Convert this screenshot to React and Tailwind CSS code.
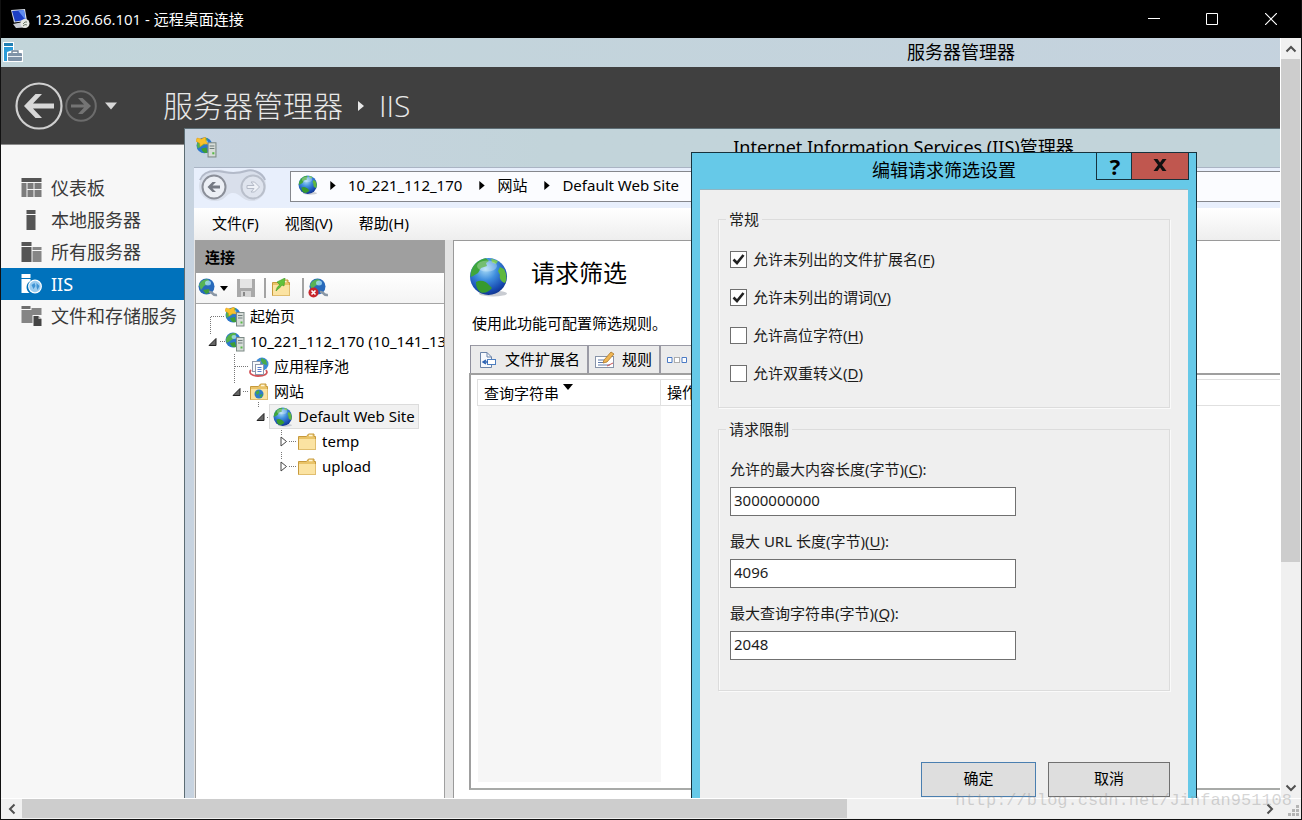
import React from "react";

/* ---------- small drawings ---------- */

function Globe({ className, id }) {
  return (
    <svg className={className} viewBox="0 0 40 40" aria-hidden="true">
      <defs>
        <radialGradient id={id} cx="0.42" cy="0.3" r="0.75">
          <stop offset="0" stopColor="#a9dcf7" />
          <stop offset="0.4" stopColor="#3f8ede" />
          <stop offset="0.8" stopColor="#1749b0" />
          <stop offset="1" stopColor="#0d2f86" />
        </radialGradient>
      </defs>
      <ellipse cx="24" cy="36.500" rx="14" ry="3" fill="#c9ccd2" />
      <circle cx="19.500" cy="19.500" r="18.500" fill={`url(#${id})`} />
      <path d="M2 15C4 7 10 2.500 17 1.300L20 4L17 6L18 9L12 11L9 16L4 19L1.500 20Z" fill="#3fa63c" />
      <path d="M7 25C12 22 18 25 20 28L23 31C20 35 16 36.500 12 35.500C8 33 7 29 7 25Z" fill="#379a2f" />
      <path d="M31 10L35 12C38 17 38 23 36 26C32 25 30 21 31 18L29 14Z" fill="#5fb83e" />
      <path d="M22 1.500L29 4L27 7L23 5.500Z" fill="#7cc85c" />
      <ellipse cx="18" cy="9" rx="10" ry="5.500" fill="#fff" opacity="0.28" />
    </svg>
  );
}

function ServerGlobe({ className, star }) {
  return (
    <svg className={className} viewBox="0 0 20 20" aria-hidden="true">
      <circle cx="8" cy="8" r="7.500" fill="#2c77cc" />
      <path d="M1 7C3 2 8 0 11 1.500L10 6L5 9L1.500 11Z" fill="#55b24a" />
      <path d="M5 11L10 10L11 15C8 16 6 14.500 5 11Z" fill="#3d9e35" />
      <ellipse cx="9" cy="5" rx="2.500" ry="2" fill="#a9dcf7" opacity="0.8" />
      {star && <path d="M1 1L5 2L9 0L9.500 4L12 7L7.500 6.500L4 9L3.500 6L0 4Z" fill="#f9c22c" stroke="#e39a12" strokeWidth="0.500" />}
      <rect x="11.500" y="5.500" width="7.500" height="13.500" fill="#d6dcd8" stroke="#7d8a86" />
      <path d="M13 8.500h4.500M13 11h4.500" stroke="#6f7d7b" />
      <rect x="15.500" y="14.500" width="2" height="2" fill="#58b947" />
    </svg>
  );
}

function Folder({ className, children }) {
  return (
    <svg className={className} viewBox="0 0 20 20" aria-hidden="true">
      <path d="M1.500 4.500h8l2-2.500h5.500v2.500h1.500v13h-17Z" fill="#e9c368" stroke="#c79a3c" />
      <path d="M2 7h16.500v10.500H2Z" fill="#fbe3a2" />
      <path d="M12 3.500h3.500" stroke="#fff6d8" strokeWidth="1.500" />
      {children}
    </svg>
  );
}

function PoolIcon({ className }) {
  return (
    <svg className={className} viewBox="0 0 20 20" aria-hidden="true">
      <circle cx="13" cy="7" r="6.500" fill="#3c8bd8" />
      <path d="M12 1L17 3L18 8L14 7L12 4Z" fill="#49ab49" />
      <path d="M2 13C-1 16 3 19 9 19S20 17 17 13" fill="none" stroke="#d2555a" strokeWidth="1.800" />
      <rect x="3.500" y="4.500" width="8" height="10" fill="#f7f9fc" stroke="#8e98ab" />
      <rect x="6.500" y="7.500" width="8" height="10" fill="#fff" stroke="#8e98ab" />
      <path d="M8.500 10.500h4M8.500 12.500h4M8.500 14.500h4" stroke="#5a7fcf" />
    </svg>
  );
}

function Triangle({ className }) {
  return (
    <svg className={className} viewBox="0 0 8 10" aria-hidden="true">
      <path d="M1 0L7 5L1 10Z" fill="currentColor" />
    </svg>
  );
}

function Caret({ className }) {
  return (
    <svg className={className} viewBox="0 0 10 6" aria-hidden="true">
      <path d="M0 0H10L5 6Z" fill="currentColor" />
    </svg>
  );
}

function Chevron({ d }) {
  return (
    <svg className="h-3 w-3" viewBox="0 0 12 12" aria-hidden="true">
      <path d={d} fill="none" stroke="#505050" strokeWidth="2" />
    </svg>
  );
}

const navIcons = {
  dash: (
    <g fill="#7c7c7c">
      <rect x="0" y="0" width="20" height="4" fill="#555" />
      <rect x="0" y="5" width="5" height="14" />
      <rect x="6" y="5" width="6" height="6" />
      <rect x="13" y="5" width="7" height="6" />
      <rect x="6" y="12" width="6" height="7" />
      <rect x="13" y="12" width="7" height="7" />
    </g>
  ),
  local: (
    <g fill="#555">
      <rect x="5" y="0" width="9" height="4" />
      <rect x="5" y="5" width="9" height="15" />
    </g>
  ),
  all: (
    <g fill="#555">
      <rect x="0" y="0" width="10" height="4" />
      <rect x="0" y="5" width="10" height="15" />
      <rect x="11" y="5" width="9" height="3" fill="#868686" />
      <rect x="11" y="9" width="9" height="11" fill="#868686" />
    </g>
  ),
  iis: (
    <g fill="#fff">
      <rect x="0" y="0" width="9" height="4" />
      <path d="M0 5H9V7A7 7 0 0 0 8 19H0Z" />
      <circle cx="13.500" cy="12.500" r="6.300" fill="#9ccdf0" stroke="#fff" strokeWidth="1.200" />
      <path d="M10 11L13 9L14 12L12 15ZM15 9L18 12L16 16L15 13Z" fill="#3f93d3" />
    </g>
  ),
  storage: (
    <g fill="#6d6d6d">
      <rect x="0" y="0" width="9" height="3" />
      <path d="M0 4H10V2H20V9H11V17H0Z" fill="#858585" />
      <path d="M12 10H17L20 13V20H12Z" fill="#444" />
      <path d="M17 10V13H20Z" fill="#bbb" />
    </g>
  ),
};

const navItems = [
  { icon: "dash", label: "仪表板" },
  { icon: "local", label: "本地服务器" },
  { icon: "all", label: "所有服务器" },
  { icon: "iis", label: "IIS", active: true },
  { icon: "storage", label: "文件和存储服务" },
];

/* ---------- host window ---------- */

function HostTitleBar() {
  return (
    <header className="flex h-[38px] shrink-0 items-center bg-black pl-[9px] text-[15px] text-white">
      <svg className="h-5 w-5" viewBox="0 0 20 20" aria-hidden="true">
        <path d="M1 1L15 0L17 12L4 13.500Z" fill="#d5dbe6" />
        <path d="M2 2L14 1L15.500 11L5 12.500Z" fill="#1c3fc4" />
        <path d="M8 1.500L14 1L15.500 11Z" fill="#5e8cf0" />
        <path d="M3 15L13 13L14 18.500L6 19Z" fill="#c9cdd6" />
        <circle cx="15" cy="14.500" r="4.500" fill="#e6e8e4" />
        <path d="M13 15L15 13L17 13M13 17L15 15.500L17 16" fill="none" stroke="#6c7a6a" />
      </svg>
      <h1 className="ml-[5px] flex-1 font-['Open_Sans','Noto_Sans_CJK_SC',sans-serif]">123.206.66.101 - 远程桌面连接</h1>
      <button aria-label="最小化" className="grid h-full w-[58px] place-items-center">
        <svg className="h-3 w-3" viewBox="0 0 12 12"><path d="M0 5.500H12" stroke="#fff" /></svg>
      </button>
      <button aria-label="最大化" className="grid h-full w-[58px] place-items-center">
        <svg className="h-3 w-3" viewBox="0 0 12 12"><path d="M0.500 0.500H11.500V11.500H0.500Z" fill="none" stroke="#fff" /></svg>
      </button>
      <button aria-label="关闭" className="grid h-full w-[60px] place-items-center">
        <svg className="h-3 w-3" viewBox="0 0 12 12"><path d="M0 0L12 12M12 0L0 12" stroke="#fff" strokeWidth="1.200" /></svg>
      </button>
    </header>
  );
}

/* ---------- server manager ---------- */

function ServerManager() {
  return (
    <section className="flex h-full flex-col">
      <div className="flex h-[29px] shrink-0 items-center bg-linear-to-r from-[#c2d5da] to-[#c6d1e0] px-[2px] pb-[2px]">
        <svg className="h-5 w-5" viewBox="0 0 20 20" aria-hidden="true">
          <path d="M0 0H11V8H20V20H0Z" fill="#fff" />
          <path d="M1 1H10V4H1Z" fill="#1f7fb4" />
          <path d="M1 5H10V8L4 10V19H1Z" fill="#2a9bd8" />
          <path d="M9 11V9H15V11" fill="none" stroke="#6c7f94" strokeWidth="1.300" />
          <rect x="5" y="11" width="14" height="8" rx="1" fill="#7f93a8" />
          <path d="M5 14.500H19" fill="none" stroke="#e8eef3" />
        </svg>
        <h2 className="flex-1 pr-5 text-center text-lg leading-6 text-black">服务器管理器</h2>
      </div>
      <div className="flex h-[78px] shrink-0 items-center border-b border-[#8b8b8b] bg-[#404040] pl-[14px] text-[#e8e8e8]">
        <button aria-label="后退">
          <svg className="h-12 w-12" viewBox="0 0 48 48">
            <circle cx="24" cy="24" r="22.500" fill="none" stroke="#cfcfcf" strokeWidth="2.200" />
            <path d="M39 21.500V26.500H18L27 36H20.500L9 24L20.500 12H27L18 21.500Z" fill="#d8d8d8" />
          </svg>
        </button>
        <button aria-label="前进" className="ml-[2px]">
          <svg className="h-8 w-8" viewBox="0 0 32 32">
            <circle cx="16" cy="16" r="14.800" fill="none" stroke="#6c6c6c" strokeWidth="2" />
            <path d="M6 14.500V17.500H19L13 24H17.500L26 16L17.500 8H13L19 14.500Z" fill="#747474" />
          </svg>
        </button>
        <button aria-label="历史记录" className="ml-2">
          <Caret className="h-[8px] w-3 text-[#d8d8d8]" />
        </button>
        <div className="ml-[46px] flex items-center font-['Open_Sans','Noto_Sans_CJK_SC',sans-serif] text-[30px] leading-10 font-light">
          <span>服务器管理器</span>
          <Triangle className="mx-[14px] h-[10px] w-[8px]" />
          <span>IIS</span>
        </div>
      </div>
      <nav className="w-[183px] flex-1 bg-[#f7f7f7] pt-[27px]">
        {navItems.map((n) => (
          <a
            key={n.label}
            href="#"
            className={
              n.active
                ? "flex h-8 items-center gap-[9px] bg-[#0072bc] pl-5 text-lg whitespace-nowrap text-white"
                : "flex h-8 items-center gap-[9px] pl-5 text-lg whitespace-nowrap text-[#3a3a3a]"
            }
          >
            <svg className="h-5 w-[21px] shrink-0" viewBox="0 0 20 20" aria-hidden="true">{navIcons[n.icon]}</svg>
            {n.label}
          </a>
        ))}
      </nav>
    </section>
  );
}

/* ---------- IIS manager ---------- */

const tree = [
  { level: 0, label: "起始页", icon: "start" },
  { level: 0, label: "10_221_112_170 (10_141_13", icon: "server", state: "open" },
  { level: 1, label: "应用程序池", icon: "pool" },
  { level: 1, label: "网站", icon: "sites", state: "open" },
  { level: 2, label: "Default Web Site", icon: "globe", state: "open", selected: true },
  { level: 3, label: "temp", icon: "folder", state: "closed" },
  { level: 3, label: "upload", icon: "folder", state: "closed" },
];

const indents = ["pl-[12px]", "pl-[36px]", "pl-[60px]", "pl-[84px]"];

function TreeIcon({ kind }) {
  const size = "h-5 w-5 shrink-0";
  if (kind === "start") return <ServerGlobe className={size} star />;
  if (kind === "server") return <ServerGlobe className={size} />;
  if (kind === "pool") return <PoolIcon className={size} />;
  if (kind === "globe") return <Globe className={size} id="tree-globe" />;
  if (kind === "sites")
    return (
      <Folder className={size}>
        <circle cx="10" cy="12" r="4.500" fill="#2f7ccb" />
        <path d="M6.500 10L10 8L10.500 11L8 13ZM10 13L14 12L12 16Z" fill="#45a845" />
      </Folder>
    );
  return <Folder className={size} />;
}

function Expander({ state }) {
  return (
    <span className="w-[17px] shrink-0">
      {state && (
        <svg className="h-[11px] w-[9px]" viewBox="0 0 9 11" aria-hidden="true">
          {state === "open" ? (
            <path d="M8 2.500V9.500H1Z" fill="#666" stroke="#222" />
          ) : (
            <path d="M1 1L6.500 5.500L1 10Z" fill="#fff" stroke="#444" />
          )}
        </svg>
      )}
    </span>
  );
}

function ConnectionTree() {
  return (
    <div className="relative flex-1 overflow-hidden bg-white">
      <svg className="absolute top-0 left-0 h-[175px] w-[110px]" viewBox="0 0 110 175" aria-hidden="true">
        <path
          d="M15 12.500H28M14.500 13V30M24 37.500H29M38.500 50V80M39 62.500H52M47 87.500H53M62.500 98V104M71 113.500H76M85.500 124V132M93 137.500H100M85.500 148V156M93 162.500H100"
          fill="none"
          stroke="#777"
          strokeDasharray="1 1"
        />
      </svg>
      <ul>
        {tree.map((t) => (
          <li key={t.label} className={`relative flex h-[25px] items-center whitespace-nowrap ${indents[t.level]}`}>
            <Expander state={t.state} />
            <span
              className={
                t.selected
                  ? "-mx-1 flex h-[25px] items-center gap-[5px] border border-[#dcdcdc] bg-[#f1f1f1] px-[3px]"
                  : "flex items-center gap-[5px]"
              }
            >
              <TreeIcon kind={t.icon} />
              {t.label}
            </span>
          </li>
        ))}
      </ul>
    </div>
  );
}

function ConnectionsPanel() {
  return (
    <div className="flex w-[250px] shrink-0 flex-col border border-[#a0a0a0]">
      <h3 className="h-8 shrink-0 bg-[#9f9f9f] pl-[9px] text-[15px] leading-8 font-bold text-black">连接</h3>
      <div className="flex h-[31px] shrink-0 items-center border-b border-[#a5a5a5] bg-linear-to-b from-white to-[#f4f4f4] pl-[2px]">
        <button aria-label="连接到服务器" className="flex items-center gap-[2px]">
          <svg className="h-5 w-5" viewBox="0 0 20 20">
            <circle cx="8.500" cy="8.500" r="8" fill="#2769bb" />
            <path d="M1 7C3 2 8 0 11 2L10 6L6 8L3 12Z" fill="#57b455" />
            <ellipse cx="10" cy="5" rx="3" ry="2.500" fill="#a4dcf5" opacity="0.8" />
            <path d="M5 12L11 11L12 14L8 16Z" fill="#3f9e3a" />
            <path d="M11 14C15 13 14 18 19 17" fill="none" stroke="#8a97a5" strokeWidth="2.500" />
          </svg>
          <Caret className="h-[5px] w-2 text-black" />
        </button>
        <button aria-label="保存" className="ml-[8px]">
          <svg className="h-5 w-5" viewBox="0 0 20 20">
            <path d="M1 1H19V19H1Z" fill="#a9a9a9" />
            <path d="M4 1H16V10H4Z" fill="#e4e4e4" />
            <path d="M5 13H15V19H5Z" fill="#d4d4d4" />
            <rect x="7" y="14" width="2" height="4" fill="#888" />
          </svg>
        </button>
        <span className="ml-[8px] h-5 w-[2px] bg-[#a3a3a3]" />
        <button aria-label="向上" className="ml-[5px]">
          <Folder className="h-5 w-5">
            <path d="M5 13C6 9 7 8 9 7L6 4L14 0L13 8L11 7C10 9 8 10 5 13Z" fill="#62c23b" stroke="#3d9a24" strokeWidth="0.600" />
          </Folder>
        </button>
        <span className="ml-[11px] h-5 w-[2px] bg-[#a3a3a3]" />
        <button aria-label="断开连接" className="ml-[4px]">
          <svg className="h-5 w-5" viewBox="0 0 20 20">
            <circle cx="9.500" cy="8.500" r="8" fill="#2769bb" />
            <path d="M2 7C4 2 9 0 12 2L11 6L7 8L4 12Z" fill="#57b455" />
            <ellipse cx="11" cy="5" rx="3" ry="2.500" fill="#a4dcf5" opacity="0.8" />
            <path d="M12 14C16 13 15 18 20 17" fill="none" stroke="#8a97a5" strokeWidth="2.500" />
            <circle cx="5.500" cy="14.500" r="5" fill="#c8252c" />
            <path d="M3.500 12.500L7.500 16.500M7.500 12.500L3.500 16.500" stroke="#fff" strokeWidth="1.600" />
          </svg>
        </button>
      </div>
      <ConnectionTree />
    </div>
  );
}

function FeatureTabs() {
  const tab = "flex h-[28px] items-center border-t border-r-2 border-[#9a9aa4] bg-[#ebebeb]";
  return (
    <div role="tablist" className="ml-px flex shrink-0 border-l border-[#8f8f9c]">
      <button role="tab" className={`${tab} gap-[8px] pr-[7px] pl-[8px]`}>
        <svg className="h-[18px] w-[18px]" viewBox="0 0 18 18" aria-hidden="true">
          <path d="M1.500 1.500H8L12.500 6V16.500H1.500Z" fill="#f6f9fd" stroke="#6a83a8" />
          <path d="M8 1.500V6H12.500" fill="none" stroke="#6a83a8" />
          <rect x="8.500" y="8.500" width="8" height="5" fill="#fff" stroke="#4d7ec0" />
          <path d="M4 11H9M7 9L4 11L7 13" fill="none" stroke="#2d63b3" strokeWidth="1.500" />
        </svg>
        文件扩展名
      </button>
      <button role="tab" className={`${tab} gap-[7px] pr-[7px] pl-[6px]`}>
        <svg className="h-5 w-5" viewBox="0 0 20 20" aria-hidden="true">
          <rect x="0.500" y="6.500" width="18" height="11" fill="#fff" stroke="#8793a8" />
          <path d="M3 10H9M3 12.500H8M3 15H15" stroke="#5d78a8" />
          <path d="M8 13L9 10L16 2L19 4L12 12Z" fill="#efb552" stroke="#a9762a" strokeWidth="0.800" />
          <path d="M12 16L18 13" stroke="#c55" />
        </svg>
        规则
      </button>
      <button role="tab" className={`${tab} gap-[7px] pr-[10px] pl-[6px] whitespace-nowrap`}>
        <svg className="h-5 w-5" viewBox="0 0 20 20" aria-hidden="true">
          <path d="M0.500 7.500H5V12.500H0.500ZM15 7.500H19.500V12.500H15Z" fill="#fff" stroke="#4b7ac4" />
          <rect x="7.500" y="7.500" width="5" height="5" fill="#fff" stroke="#666" strokeDasharray="1 1" />
        </svg>
        隐藏段
      </button>
    </div>
  );
}

function FeaturePanel() {
  return (
    <div className="flex flex-1 flex-col border-t border-l border-[#9a9a9a] bg-white pt-4 pb-[48px] pl-[15px] text-black">
      <div className="flex h-10 shrink-0 items-center gap-[22px]">
        <Globe className="h-10 w-10" id="feature-globe" />
        <h2 className="pb-2 text-2xl leading-8">请求筛选</h2>
      </div>
      <p className="mt-[14px] mb-[10px] shrink-0 pl-[3px] leading-6">使用此功能可配置筛选规则。</p>
      <FeatureTabs />
      <div className="flex flex-1 border-2 border-r-0 border-t-[#9f9f9f] border-b-[#a8aaa8] border-l-[#9f9f9f] p-[6px] pt-[4px]">
        <table className="h-full w-full table-fixed border-collapse">
          <thead>
            <tr className="h-[26px]">
              <th className="w-[183px] border border-[#e0e0e0] pl-[6px] text-left font-normal">
                <span className="flex items-start gap-1 leading-6">
                  查询字符串
                  <Caret className="mt-[3px] h-[6px] w-[10px]" />
                </span>
              </th>
              <th className="border border-r-0 border-[#e0e0e0] pl-[6px] text-left font-normal">操作</th>
            </tr>
          </thead>
          <tbody>
            <tr>
              <td className="bg-[#f6f6f6]" />
              <td />
            </tr>
          </tbody>
        </table>
      </div>
    </div>
  );
}

function IisManager() {
  return (
    <section className="absolute top-[90px] left-[183px] flex h-[720px] w-[1440px] flex-col border border-[#5d6d74] bg-linear-to-r from-[#c7d3e0] via-[#c2d4da] via-25% to-[#c2d4da] px-[9px] pb-[9px] text-[15px]">
      <div className="flex h-[38px] shrink-0 items-center pb-[2px] pl-[2px]">
        <ServerGlobe className="h-[21px] w-[21px]" star />
        <h2 className="flex-1 pr-6 text-center text-lg leading-7 text-black">Internet Information Services (IIS)管理器</h2>
      </div>
      <div className="flex h-[41px] shrink-0 items-center border-t border-[#aab4c4] bg-[#e8effc] pb-[4px] pl-[4px]">
        <svg className="h-9 w-[70px]" viewBox="0 0 70 36" aria-hidden="true">
          <path d="M18 2C26 1 28 4 35 4S45 1 54 2C64 3 68 10 68 18S62 33 54 33C44 33 42 25 35 25S28 33 17 33C7 33 1 26 1 18S8 3 18 2Z" fill="#d9dfeb" />
          <path d="M2 12C6 2 16 2 26 4S42 5 48 3S64 4 67 12" fill="none" stroke="#b3bac9" strokeWidth="2" />
          <circle cx="16" cy="19" r="11.500" fill="#eceff5" stroke="#8b8f99" strokeWidth="2" />
          <path d="M22 17.500V20.500H14.500L18 24H14.500L9.500 19L14.500 14H18L14.500 17.500Z" fill="#757983" />
          <circle cx="55" cy="19" r="11.500" fill="#dfe4ee" stroke="#b9bfcb" strokeWidth="2" />
          <path d="M49 17.500V20.500H56L53 24H56.500L61.500 19L56.500 14H53L56 17.500Z" fill="#eef1f7" stroke="#b4bac7" />
        </svg>
        <div className="ml-[22px] flex h-[31px] flex-1 items-center border border-[#85878d] bg-[#fbfcff] pb-[2px] pl-[7px] text-black">
          <Globe className="h-5 w-5" id="address-globe" />
          <Triangle className="mr-[11px] ml-[11px] h-[9px] w-[8px]" />
          <span>10_221_112_170</span>
          <Triangle className="mr-[11px] ml-[16px] h-[9px] w-[8px]" />
          <span>网站</span>
          <Triangle className="mr-[11px] ml-[16px] h-[9px] w-[8px]" />
          <span>Default Web Site</span>
        </div>
      </div>
      <div className="flex h-8 shrink-0 items-center gap-[26px] bg-linear-to-b from-white to-[#eeeeee] pb-[2px] pl-[18px] text-black">
        <button>文件(F)</button>
        <button>视图(V)</button>
        <button>帮助(H)</button>
      </div>
      <div className="flex min-h-0 flex-1 bg-[#e3e3e3] pl-px">
        <ConnectionsPanel />
        <div className="w-2 shrink-0" />
        <FeaturePanel />
      </div>
    </section>
  );
}

/* ---------- dialog ---------- */

function CheckRow({ id, label, hotkey, checked }) {
  return (
    <div className="flex h-[38px] items-center gap-[6px]">
      <span className="grid h-[17px] w-[17px] shrink-0">
        <input
          id={id}
          type="checkbox"
          defaultChecked={checked}
          className="peer col-start-1 row-start-1 h-[17px] w-[17px] appearance-none border border-[#6f6f6f] bg-white"
        />
        <svg
          className="pointer-events-none invisible col-start-1 row-start-1 h-[17px] w-[17px] peer-checked:visible"
          viewBox="0 0 17 17"
          aria-hidden="true"
        >
          <path d="M3.500 8.500L7 12L13.500 4" fill="none" stroke="#222" strokeWidth="2.600" />
        </svg>
      </span>
      <label htmlFor={id}>
        {label}(<u className="underline-offset-2">{hotkey}</u>)
      </label>
    </div>
  );
}

function LimitField({ id, label, hotkey, value }) {
  return (
    <div className="flex flex-col gap-[6px]">
      <label htmlFor={id} className="leading-6">
        {label}(<u className="underline-offset-2">{hotkey}</u>):
      </label>
      <input
        id={id}
        type="text"
        defaultValue={value}
        className="h-[29px] w-[286px] border border-[#707070] bg-white px-[3px] pb-[3px] outline-none"
      />
    </div>
  );
}

function FilterDialog() {
  const box = "border border-[#dcdcdc] px-[11px] shadow-[inset_1px_0_0_#fafafa,1px_1px_0_#fafafa]";
  return (
    <section
      role="dialog"
      aria-labelledby="dialog-title"
      className="absolute top-[114px] left-[690px] w-[506px] border border-[#17323d] bg-[#66c9e8] px-2 pb-2 text-[15px] text-[#1c1c1c]"
    >
      <div className="relative flex h-9 items-center justify-center">
        <h2 id="dialog-title" className="pb-[2px] text-lg leading-7 text-black">编辑请求筛选设置</h2>
        <div className="absolute top-0 -right-px flex h-[27px] border border-t-0 border-[#17323d]">
          <button aria-label="帮助" className="w-[34px] pl-[2px] font-['Open_Sans',sans-serif] text-[22px] leading-6 font-bold text-black">?</button>
          <button aria-label="关闭" className="grid w-[57px] place-items-center border-l border-[#17323d] bg-[#c0574f] pb-[2px]">
            <svg className="h-3 w-[14px]" viewBox="0 0 14 12">
              <path d="M0.500 0H4.500L7 3.500L9.500 0H13.500L9 6L13.500 12H9.500L7 8.500L4.500 12H0.500L5 6Z" fill="#111" />
            </svg>
          </button>
        </div>
      </div>
      <form className="border-t border-[#8fb5c2] bg-[#efefef] px-[18px] pt-[19px] pb-6">
        <fieldset className={`${box} pb-[15px]`}>
          <legend className="-ml-1 px-[3px] leading-5">常规</legend>
          <div className="pt-[11px]">
            <CheckRow id="ext" label="允许未列出的文件扩展名" hotkey="F" checked />
            <CheckRow id="verb" label="允许未列出的谓词" hotkey="V" checked />
            <CheckRow id="high" label="允许高位字符" hotkey="H" />
            <CheckRow id="double" label="允许双重转义" hotkey="D" />
          </div>
        </fieldset>
        <fieldset className={`${box} mt-[11px] pb-[30px]`}>
          <legend className="-ml-1 px-[3px] leading-5">请求限制</legend>
          <div className="flex flex-col gap-[13px] pt-[18px]">
            <LimitField id="content" label="允许的最大内容长度(字节)" hotkey="C" value="3000000000" />
            <LimitField id="url" label="最大 URL 长度(字节)" hotkey="U" value="4096" />
            <LimitField id="query" label="最大查询字符串(字节)" hotkey="Q" value="2048" />
          </div>
        </fieldset>
        <div className="mt-[71px] flex justify-end gap-3">
          <button type="button" className="h-[35px] w-[115px] border border-[#4a7fb0] bg-[#dedede] pb-[2px] text-black">确定</button>
          <button type="button" className="h-[35px] w-[122px] border border-[#707070] bg-[#dedede] pb-[2px] text-black">取消</button>
        </div>
      </form>
    </section>
  );
}

/* ---------- page ---------- */

export default function App() {
  return (
    <main className="relative flex h-screen flex-col overflow-hidden border-x border-b border-[#111] bg-[#f0f0f0] font-['Noto_Sans','Noto_Sans_CJK_SC',sans-serif]">
      <HostTitleBar />
      <div className="flex min-h-0 flex-1">
        <div className="min-w-0 flex-1 overflow-hidden">
          <div className="relative h-[1080px] w-[1920px] bg-white">
            <ServerManager />
            <IisManager />
            <FilterDialog />
          </div>
        </div>
        <div className="flex w-[21px] shrink-0 flex-col border-l border-white">
          <button aria-label="向上滚动" className="grid h-[21px] shrink-0 place-items-center"><Chevron d="M1.500 8.500L6 4L10.500 8.500" /></button>
          <div className="min-h-0 flex-1"><div className="h-[70%] w-[19px] bg-[#cdcdcd]" /></div>
          <button aria-label="向下滚动" className="grid h-[21px] shrink-0 place-items-center"><Chevron d="M1.500 3.500L6 8L10.500 3.500" /></button>
        </div>
      </div>
      <div className="flex h-[21px] shrink-0 border-t border-white">
        <button aria-label="向左滚动" className="grid w-[21px] place-items-center"><Chevron d="M8.500 1.500L4 6L8.500 10.500" /></button>
        <div className="flex-1"><div className="h-[19px] w-2/3 bg-[#cdcdcd]" /></div>
        <button aria-label="向右滚动" className="grid w-[21px] place-items-center"><Chevron d="M3.500 1.500L8 6L3.500 10.500" /></button>
        <div className="flex w-[21px] items-end justify-end p-[2px]">
          <svg className="h-3 w-3" viewBox="0 0 12 12" aria-hidden="true">
            <path d="M9 0h3v3H9zM5 4h3v3H5zM9 4h3v3H9zM1 8h3v3H1zM5 8h3v3H5zM9 8h3v3H9z" fill="#b5b5b5" />
          </svg>
        </div>
      </div>
      <p className="pointer-events-none absolute right-[9px] bottom-[6px] font-['Liberation_Mono',monospace] text-[17px] leading-6 text-[#8a8a8a]/35">
        http://blog.csdn.net/Jinfan951108
      </p>
    </main>
  );
}
